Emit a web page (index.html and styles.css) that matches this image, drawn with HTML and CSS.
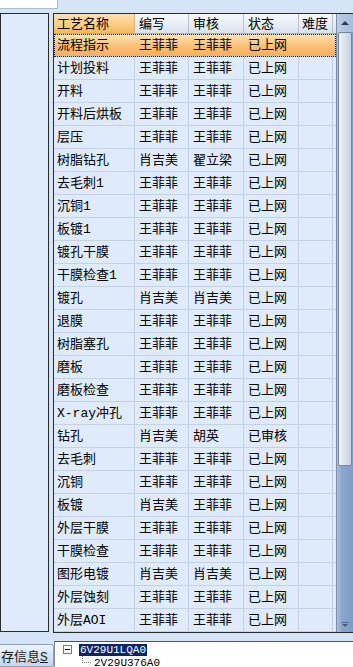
FILE: index.html
```html
<!DOCTYPE html>
<html>
<head>
<meta charset="utf-8">
<link rel="stylesheet" href="styles.css">
</head>
<body>
<div class="app">
  <div class="top"><div class="topbox"></div></div>
  <div class="main">
    <div class="leftpanel"></div>
    <div class="gridwrap">
      <div class="grid">
        <div class="row head">
          <div class="cell hsel">工艺名称</div>
          <div class="cell">编写</div>
          <div class="cell">审核</div>
          <div class="cell">状态</div>
          <div class="cell">难度</div>
          <div class="cell fill"></div>
        </div>
        <div class="row sel"><div class="cell">流程指示</div><div class="cell">王菲菲</div><div class="cell">王菲菲</div><div class="cell">已上网</div><div class="cell"></div><div class="cell fill"></div></div>
        <div class="row"><div class="cell">计划投料</div><div class="cell">王菲菲</div><div class="cell">王菲菲</div><div class="cell">已上网</div><div class="cell"></div><div class="cell fill"></div></div>
        <div class="row"><div class="cell">开料</div><div class="cell">王菲菲</div><div class="cell">王菲菲</div><div class="cell">已上网</div><div class="cell"></div><div class="cell fill"></div></div>
        <div class="row"><div class="cell">开料后烘板</div><div class="cell">王菲菲</div><div class="cell">王菲菲</div><div class="cell">已上网</div><div class="cell"></div><div class="cell fill"></div></div>
        <div class="row"><div class="cell">层压</div><div class="cell">王菲菲</div><div class="cell">王菲菲</div><div class="cell">已上网</div><div class="cell"></div><div class="cell fill"></div></div>
        <div class="row"><div class="cell">树脂钻孔</div><div class="cell">肖吉美</div><div class="cell">翟立梁</div><div class="cell">已上网</div><div class="cell"></div><div class="cell fill"></div></div>
        <div class="row"><div class="cell">去毛刺1</div><div class="cell">王菲菲</div><div class="cell">王菲菲</div><div class="cell">已上网</div><div class="cell"></div><div class="cell fill"></div></div>
        <div class="row"><div class="cell">沉铜1</div><div class="cell">王菲菲</div><div class="cell">王菲菲</div><div class="cell">已上网</div><div class="cell"></div><div class="cell fill"></div></div>
        <div class="row"><div class="cell">板镀1</div><div class="cell">王菲菲</div><div class="cell">王菲菲</div><div class="cell">已上网</div><div class="cell"></div><div class="cell fill"></div></div>
        <div class="row"><div class="cell">镀孔干膜</div><div class="cell">王菲菲</div><div class="cell">王菲菲</div><div class="cell">已上网</div><div class="cell"></div><div class="cell fill"></div></div>
        <div class="row"><div class="cell">干膜检查1</div><div class="cell">王菲菲</div><div class="cell">王菲菲</div><div class="cell">已上网</div><div class="cell"></div><div class="cell fill"></div></div>
        <div class="row"><div class="cell">镀孔</div><div class="cell">肖吉美</div><div class="cell">肖吉美</div><div class="cell">已上网</div><div class="cell"></div><div class="cell fill"></div></div>
        <div class="row"><div class="cell">退膜</div><div class="cell">王菲菲</div><div class="cell">王菲菲</div><div class="cell">已上网</div><div class="cell"></div><div class="cell fill"></div></div>
        <div class="row"><div class="cell">树脂塞孔</div><div class="cell">王菲菲</div><div class="cell">王菲菲</div><div class="cell">已上网</div><div class="cell"></div><div class="cell fill"></div></div>
        <div class="row"><div class="cell">磨板</div><div class="cell">王菲菲</div><div class="cell">王菲菲</div><div class="cell">已上网</div><div class="cell"></div><div class="cell fill"></div></div>
        <div class="row"><div class="cell">磨板检查</div><div class="cell">王菲菲</div><div class="cell">王菲菲</div><div class="cell">已上网</div><div class="cell"></div><div class="cell fill"></div></div>
        <div class="row"><div class="cell">X-ray冲孔</div><div class="cell">王菲菲</div><div class="cell">王菲菲</div><div class="cell">已上网</div><div class="cell"></div><div class="cell fill"></div></div>
        <div class="row"><div class="cell">钻孔</div><div class="cell">肖吉美</div><div class="cell">胡英</div><div class="cell">已审核</div><div class="cell"></div><div class="cell fill"></div></div>
        <div class="row"><div class="cell">去毛刺</div><div class="cell">王菲菲</div><div class="cell">王菲菲</div><div class="cell">已上网</div><div class="cell"></div><div class="cell fill"></div></div>
        <div class="row"><div class="cell">沉铜</div><div class="cell">王菲菲</div><div class="cell">王菲菲</div><div class="cell">已上网</div><div class="cell"></div><div class="cell fill"></div></div>
        <div class="row"><div class="cell">板镀</div><div class="cell">肖吉美</div><div class="cell">王菲菲</div><div class="cell">已上网</div><div class="cell"></div><div class="cell fill"></div></div>
        <div class="row"><div class="cell">外层干膜</div><div class="cell">王菲菲</div><div class="cell">王菲菲</div><div class="cell">已上网</div><div class="cell"></div><div class="cell fill"></div></div>
        <div class="row"><div class="cell">干膜检查</div><div class="cell">王菲菲</div><div class="cell">王菲菲</div><div class="cell">已上网</div><div class="cell"></div><div class="cell fill"></div></div>
        <div class="row"><div class="cell">图形电镀</div><div class="cell">肖吉美</div><div class="cell">肖吉美</div><div class="cell">已上网</div><div class="cell"></div><div class="cell fill"></div></div>
        <div class="row"><div class="cell">外层蚀刻</div><div class="cell">王菲菲</div><div class="cell">王菲菲</div><div class="cell">已上网</div><div class="cell"></div><div class="cell fill"></div></div>
        <div class="row"><div class="cell">外层AOI</div><div class="cell">王菲菲</div><div class="cell">王菲菲</div><div class="cell">已上网</div><div class="cell"></div><div class="cell fill"></div></div>
      </div>
      <div class="vscroll">
        <div class="sbtn up"><svg width="16" height="18" viewBox="0 0 16 18"><path d="M4 11 L8 7 L12 11 Z" fill="#2f3d55"/></svg></div>
        <div class="thumb"></div>
        <div class="track"></div>
        <div class="sbtn down"><svg width="16" height="12" viewBox="0 0 16 12"><path d="M5 4 L11 4 L8 7 Z" fill="#4a5a78"/><path d="M4.5 2.5 H11.5" stroke="#5b6b88" stroke-width="1"/></svg></div>
      </div>
    </div>
  </div>
  <div class="bottom">
    <div class="btn">存信息<u>S</u></div>
    <div class="tree">
      <div class="node root">
        <span class="expander"><svg width="9" height="9" viewBox="0 0 9 9"><rect x="0.5" y="0.5" width="8" height="8" fill="#fff" stroke="#7a7a7a"/><path d="M2 4.5 H7" stroke="#000"/></svg></span>
        <span class="label selected">6V29U1LQA0</span>
      </div>
      <div class="node child">
        <span class="dots"></span>
        <span class="label">2V29U376A0</span>
      </div>
    </div>
  </div>
</div>
</body>
</html>
```
FILE: styles.css
```css
* { box-sizing: border-box; }
html, body { margin: 0; padding: 0; }
body {
  background: #d5e4f6;
  width: 353px;
  height: 667px;
  overflow: hidden;
  font-family: "Liberation Mono", "Noto Sans CJK SC", monospace;
  font-size: 13px;
  color: #000;
}
.app { display: flex; flex-direction: column; width: 353px; }
.top { height: 13px; flex: none; }
.topbox {
  width: 58px; height: 9px;
  background: #fff;
  border-right: 1px solid #a9bcd6;
  border-bottom: 1px solid #a9bcd6;
}
.main { display: flex; gap: 4px; height: 620px; flex: none; }
.leftpanel {
  width: 49px;
  height: 619px;
  background: #dfeafa;
  border: 1px solid #2b2b2b;
}
.gridwrap {
  flex: 0 0 300px;
  display: flex;
  border: 1px solid #2b2b2b;
  border-right: none;
  height: 620px;
  background: #dfeafa;
  overflow: hidden;
}
.grid {
  width: 283px;
  flex: none;
  border-right: 1px solid #7d8ea8;
  display: flex;
  flex-direction: column;
}
.row {
  display: grid;
  grid-template-columns: 81px 54px 55px 55px 34px 3px;
  grid-template-rows: 23px;
  height: 23px;
  flex: none;
  overflow: hidden;
}
.cell {
  height: 23px;
  border-right: 1px solid #c3d3e7;
  border-bottom: 1px solid #c3d3e7;
  padding-left: 3px;
  padding-top: 1px;
  display: flex;
  align-items: center;
  white-space: nowrap;
  overflow: hidden;
  line-height: 1;
}
.cell.fill { border-right: none; }
.row .cell:nth-child(2), .row .cell:nth-child(3), .row .cell:nth-child(4) { padding-left: 4px; }
.row.head { height: 20px; grid-template-rows: 20px; }
.row.head .cell {
  height: 20px;
  background: linear-gradient(#f7f9fc, #e6ecf3 60%, #d9e1ec);
  border-right: 1px solid #b3c1d4;
  border-bottom: 1px solid #9fb0c8;
}
.row.head .cell.fill { border-right: none; }
.row.head .cell.hsel {
  background: linear-gradient(#fde2b0, #fbcd82 55%, #f5b65e);
  border-right: 1px solid #d8b27a;
}
.row.sel {
  background: linear-gradient(#fee3b6, #fcc27a 50%, #f9ac58);
  outline: 1px dotted #222;
  outline-offset: -1px;
}
.row.sel .cell { border-right-color: transparent; }
.vscroll {
  flex: 1;
  display: flex;
  flex-direction: column;
  background: linear-gradient(90deg, #a9bedc, #8aa5cc 30%, #7f9bc6);
}
.sbtn.up {
  height: 18px;
  flex: none;
  background: linear-gradient(90deg, #bccde6, #a6bcdc);
}
.sbtn svg { display: block; }
.thumb {
  height: 434px;
  flex: none;
  margin: 0 1px;
  border: 1px solid #7787a3;
  border-radius: 2px;
  background: linear-gradient(90deg, #f0f4f8, #dde4ee 40%, #cdd7e4 80%, #c4cfdd);
}
.track { flex: 1; }
.sbtn.down { height: 12px; flex: none; }
.bottom { display: flex; margin-top: 8px; height: 26px; flex: none; }
.btn {
  width: 54px;
  height: 23px;
  margin-top: 3px;
  border: 1px solid #8aa0bf;
  border-left: none;
  border-radius: 0 3px 3px 0;
  background: linear-gradient(#eef4fb, #d6e3f3 50%, #c5d6ec);
  font-family: "Noto Sans CJK SC", sans-serif;
  font-size: 13px;
  line-height: 21px;
  padding-left: 1px;
  white-space: nowrap;
  overflow: hidden;
  color: #1a1a1a;
}
.btn u { font-family: "Liberation Mono", monospace; }
.tree {
  flex: 1;
  background: #fff;
  border-top: 1px solid #555;
  border-left: 1px solid #8a8a8a;
  padding-left: 8px;
  font-family: "Liberation Mono", monospace;
  font-size: 11px;
}
.node { display: flex; align-items: center; height: 13px; }
.node.root { margin-top: 1px; }
.expander { width: 16px; height: 9px; display: flex; }
.expander svg { display: block; }
.label { line-height: 12px; padding: 0 1px; white-space: nowrap; }
.label.selected { background: #0a246a; color: #fff; }
.node.child { padding-left: 19px; }
.dots {
  width: 9px; height: 7px;
  border-left: 1px dotted #888;
  border-bottom: 1px dotted #888;
  margin-top: -6px;
  margin-right: 2px;
}
```
